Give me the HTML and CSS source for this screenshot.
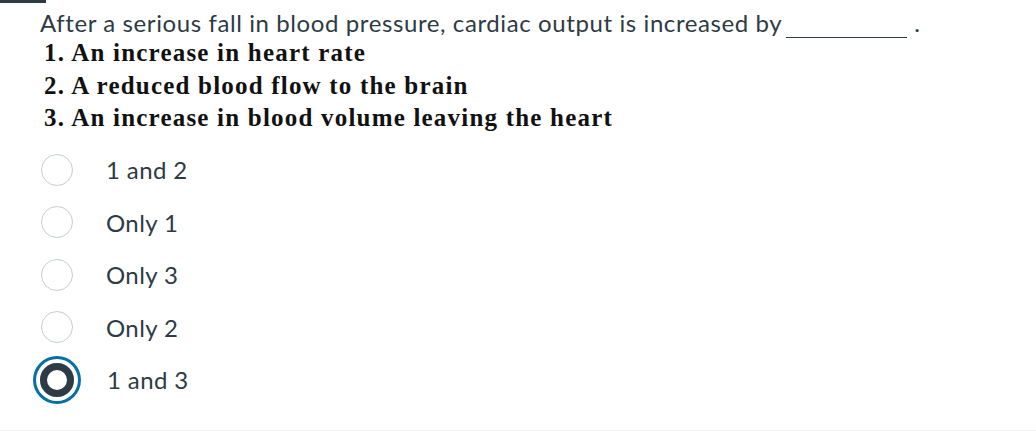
FILE: index.html
```html
<!DOCTYPE html>
<html>
<head>
<meta charset="utf-8">
<link rel="stylesheet" href="styles.css">
</head>
<body>
<div class="topbar"></div>
<div class="question">
  <div class="prompt">After a serious fall in blood pressure, cardiac output is increased by <span class="blank"></span> .</div>
  <div class="items">
    <div class="item">1. An increase in heart rate</div>
    <div class="item">2. A reduced blood flow to the brain</div>
    <div class="item">3. An increase in blood volume leaving the heart</div>
  </div>
</div>
<div class="answers">
  <label class="answer"><span class="radio"></span><span class="label">1 and 2</span></label>
  <label class="answer"><span class="radio"></span><span class="label">Only 1</span></label>
  <label class="answer"><span class="radio"></span><span class="label">Only 3</span></label>
  <label class="answer"><span class="radio"></span><span class="label">Only 2</span></label>
  <label class="answer checked"><span class="radio"></span><span class="label">1 and 3</span></label>
</div>
<div class="footer-line"></div>
</body>
</html>
```
FILE: styles.css
```css
html, body {
  margin: 0;
  padding: 0;
  background: #ffffff;
}
body {
  width: 1036px;
  height: 444px;
  overflow: hidden;
  font-family: Lato, "Open Sans", sans-serif;
  color: #2d3b45;
}
.topbar {
  width: 46px;
  height: 3px;
  background: #2d3b45;
}
.question {
  padding-left: 40px;
  padding-top: 6px;
}
.prompt {
  font-size: 24px;
  letter-spacing: 0.6px;
  line-height: 28px;
  white-space: nowrap;
}
.blank {
  display: inline-block;
  width: 121px;
  height: 0;
  border-bottom: 1.5px solid #2d3b45;
  vertical-align: -6px;
  margin-left: -2px;
}
.items {
  padding-left: 4px;
  font-family: "Liberation Serif", "Times New Roman", serif;
  font-weight: bold;
  font-size: 25px;
  letter-spacing: 1.2px;
  line-height: 32.5px;
  color: #111111;
  margin-top: -1px;
}
.answers {
  display: flex;
  flex-direction: column;
  margin-top: 9px;
}
.answer {
  display: flex;
  align-items: center;
  height: 52.5px;
}
.radio {
  box-sizing: border-box;
  width: 32px;
  height: 32px;
  border-radius: 50%;
  border: 1px solid #c7cdd1;
  margin-left: 41px;
  flex: none;
}
.checked .radio {
  width: 34px;
  height: 34px;
  margin-left: 40px;
  border: 7px solid #2d3b45;
  box-shadow: 0 0 0 4px #ffffff, 0 0 0 7px #0770a3;
}
.label {
  font-size: 24px;
  letter-spacing: 0.4px;
  margin-left: 33px;
}
.footer-line {
  position: absolute;
  left: 0;
  top: 430px;
  width: 1036px;
  height: 1px;
  background: #f0f0f0;
}
```
